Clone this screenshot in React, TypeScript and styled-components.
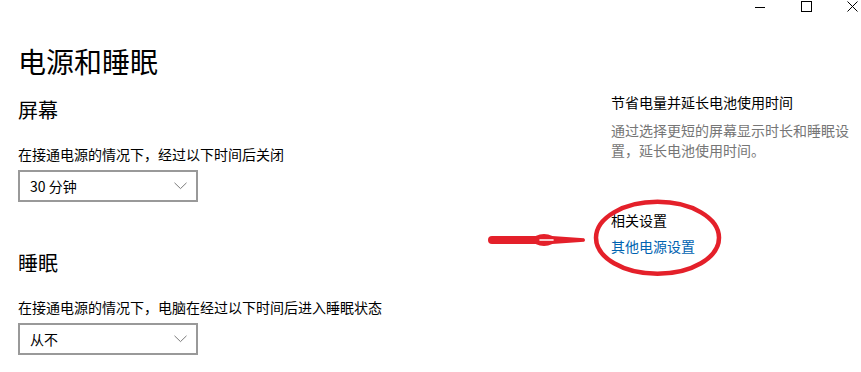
import styled, { createGlobalStyle } from "styled-components";

const GlobalStyle = createGlobalStyle`
  html, body {
    margin: 0;
    padding: 0;
    background: #ffffff;
  }
  body {
    font-family: "Noto Sans CJK SC", "Noto Sans", sans-serif;
    color: #000000;
  }
`;

const Window = styled.div`
  position: relative;
  width: 861px;
  height: 372px;
  overflow: hidden;
  background: #ffffff;
`;

const TitleBar = styled.div`
  display: flex;
  justify-content: flex-end;
  height: 14px;
  margin-right: -14px;
`;

const ControlButton = styled.div`
  width: 46px;
  height: 14px;
  display: flex;
  justify-content: center;
  align-items: flex-start;
  padding-top: 1px;
  box-sizing: border-box;
`;

const Content = styled.div`
  display: grid;
  grid-template-columns: 593px 250px;
  padding-left: 18px;
`;

const Column = styled.div`
  display: flex;
  flex-direction: column;
  align-items: flex-start;
`;

const PageTitle = styled.h1`
  margin: 29px 0 0;
  font-size: 28px;
  line-height: 36px;
  font-weight: 400;
`;

const SectionHeading = styled.h2<{ $top: number }>`
  margin: ${(p) => p.$top}px 0 0;
  font-size: 20px;
  line-height: 28px;
  font-weight: 400;
`;

const Label = styled.div<{ $top: number }>`
  margin-top: ${(p) => p.$top}px;
  font-size: 14px;
  line-height: 20px;
`;

const Select = styled.div`
  margin-top: 6px;
  width: 180px;
  height: 32px;
  box-sizing: border-box;
  border: 2px solid #999999;
  padding: 0 9px 0 10px;
  display: flex;
  align-items: center;
  justify-content: space-between;
  font-size: 14px;
`;

const SideColumn = styled.div`
  display: flex;
  flex-direction: column;
  padding-top: 78px;
`;

const SideHeading = styled.div<{ $top?: number }>`
  margin-top: ${(p) => p.$top ?? 0}px;
  font-size: 14px;
  line-height: 20px;
`;

const SideText = styled.div`
  margin-top: 8px;
  font-size: 14px;
  line-height: 20px;
  color: #767676;
`;

const Link = styled.a`
  margin-top: 6px;
  font-size: 14px;
  line-height: 20px;
  color: #0063b1;
  text-decoration: none;
`;

const Annotation = styled.svg`
  position: absolute;
  left: 0;
  top: 0;
  pointer-events: none;
`;

const Chevron = () => (
  <svg width="13" height="8" viewBox="0 0 13 8">
    <path d="M0.5 0.8 L6.5 6.6 L12.5 0.8" fill="none" stroke="#7a7a7a" strokeWidth="1" />
  </svg>
);

interface DropdownProps {
  value: string;
}

const Dropdown = ({ value }: DropdownProps) => (
  <Select>
    <span>{value}</span>
    <Chevron />
  </Select>
);

export default function App() {
  return (
    <Window>
      <GlobalStyle />
      <TitleBar>
        <ControlButton>
          <svg width="10" height="10" viewBox="0 0 10 10">
            <path d="M0 6.5 H10" stroke="#000" strokeWidth="1" />
          </svg>
        </ControlButton>
        <ControlButton>
          <svg width="11" height="11" viewBox="0 0 11 11">
            <rect x="0.5" y="0.5" width="10" height="10" fill="none" stroke="#000" strokeWidth="1" />
          </svg>
        </ControlButton>
        <ControlButton>
          <svg width="11" height="11" viewBox="0 0 11 11">
            <path d="M0.5 0.5 L10.5 10.5 M10.5 0.5 L0.5 10.5" stroke="#000" strokeWidth="1" />
          </svg>
        </ControlButton>
      </TitleBar>
      <Content>
        <Column>
          <PageTitle>电源和睡眠</PageTitle>
          <SectionHeading $top={17}>屏幕</SectionHeading>
          <Label $top={20}>在接通电源的情况下，经过以下时间后关闭</Label>
          <Dropdown value="30 分钟" />
          <SectionHeading $top={47}>睡眠</SectionHeading>
          <Label $top={20}>在接通电源的情况下，电脑在经过以下时间后进入睡眠状态</Label>
          <Dropdown value="从不" />
        </Column>
        <SideColumn>
          <SideHeading>节省电量并延长电池使用时间</SideHeading>
          <SideText>
            通过选择更短的屏幕显示时长和睡眠设
            <br />
            置，延长电池使用时间。
          </SideText>
          <SideHeading $top={50}>相关设置</SideHeading>
          <Link href="#">其他电源设置</Link>
        </SideColumn>
      </Content>
      <Annotation width="861" height="372" viewBox="0 0 861 372">
        <ellipse cx="657.5" cy="237.8" rx="61.5" ry="36" fill="none" stroke="#e4202a" strokeWidth="4.5" />
        <path d="M492 240 H538" stroke="#e4202a" strokeWidth="8" strokeLinecap="round" />
        <ellipse cx="544" cy="240" rx="11" ry="6" fill="#e4202a" />
        <path d="M552 236 L584 238.2 Q586 240 584 241.8 L552 244 Z" fill="#e4202a" />
        <path d="M540 240 H553" stroke="#ffffff" strokeWidth="1.6" strokeLinecap="round" />
      </Annotation>
    </Window>
  );
}
